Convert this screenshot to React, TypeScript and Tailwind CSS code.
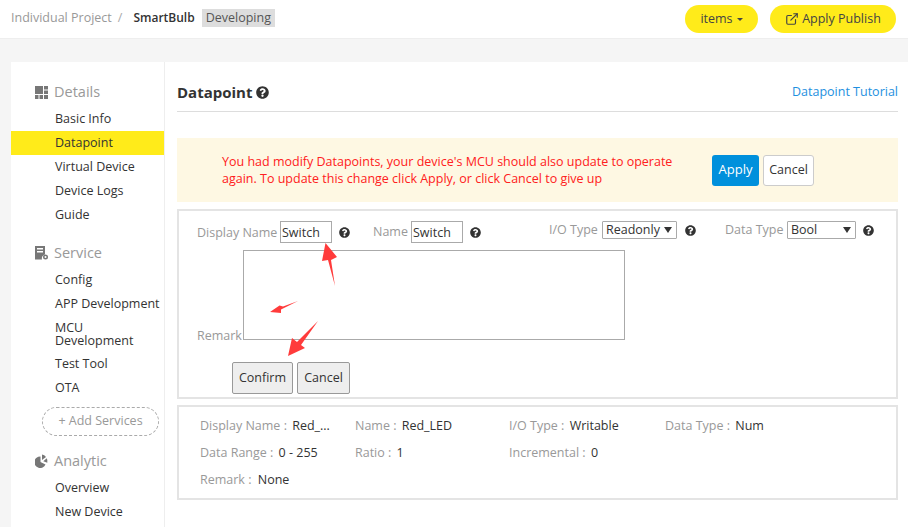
import { FaQuestionCircle } from "react-icons/fa";
import { ExternalLink } from "lucide-react";

function Help({ className = "" }: { className?: string }) {
  return <FaQuestionCircle className={`text-[11px] text-[#333] shrink-0 ${className}`} />;
}

function Caret() {
  return <span className="border-x-[4px] border-x-transparent border-t-[6px] border-t-[#333]" />;
}

function DetailsIcon() {
  return (
    <svg width="13" height="13" viewBox="0 0 13 13" fill="#777" className="shrink-0">
      <rect x="0" y="0" width="8" height="8" />
      <rect x="9" y="0" width="4" height="3.5" />
      <rect x="9" y="4.5" width="4" height="3.5" />
      <rect x="0" y="9" width="3.5" height="4" />
      <rect x="4.5" y="9" width="3.5" height="4" />
      <rect x="9" y="9" width="4" height="4" />
    </svg>
  );
}

function ServiceIcon() {
  return (
    <svg width="13" height="14" viewBox="0 0 13 14" className="shrink-0">
      <path d="M0 0h10v8.5a4 4 0 0 0-3 5H0z" fill="#777" />
      <rect x="2" y="2" width="6" height="1.5" fill="#fff" />
      <rect x="2" y="5" width="6" height="1.5" fill="#fff" />
      <circle cx="10.5" cy="11" r="2.5" fill="#777" />
      <circle cx="10.5" cy="11" r="1" fill="#fff" />
    </svg>
  );
}

function AnalyticIcon() {
  return (
    <svg width="13" height="14" viewBox="0 0 13 14" fill="#777" className="shrink-0">
      <path d="M5.5 2.5v5.5l5 2.5a5.8 5.8 0 1 1-5-8z" />
      <path d="M7 0.5a6 6 0 0 1 4 2.5l-4 3z" />
      <path d="M11.7 4.2a6 6 0 0 1 .6 4.6l-4-1.5z" />
    </svg>
  );
}

function NavGroup({ icon, title, children }: { icon: React.ReactNode; title: string; children: React.ReactNode }) {
  return (
    <div>
      <div className="flex items-center gap-[6px] pl-[24px] h-[24px] text-[14.5px] text-[#999]">
        {icon}
        <span>{title}</span>
      </div>
      <ul className="mt-[3px]">{children}</ul>
    </div>
  );
}

function NavItem({ label, active, tall }: { label: string; active?: boolean; tall?: boolean }) {
  return (
    <li
      className={`pl-[44px] flex items-center text-[#333] ${tall ? "h-[36px] leading-[13px]" : "h-[24px]"} ${active ? "bg-[#ffeb1a]" : ""}`}
    >
      {label}
    </li>
  );
}

function Field({ label, value, className }: { label: string; value: string; className: string }) {
  return (
    <div className={`whitespace-nowrap ${className}`}>
      <span className="text-[#999]">{label} : </span>
      <span className="text-[#333] ml-[2px]">{value}</span>
    </div>
  );
}

export default function App() {
  return (
    <div className="relative h-[527px] w-[908px] overflow-hidden bg-[#f5f5f5] text-[12.5px] text-[#333] font-['Open_Sans','Noto_Sans',sans-serif]">
      <header className="h-[39px] bg-white border-b border-[#eee] flex items-center justify-between pl-[11px] pr-[12px]">
        <div className="flex items-center pb-[2px]">
          <span className="text-[#999]">Individual Project</span>
          <span className="text-[#aaa] ml-[6px]">/</span>
          <span className="text-[12px] font-semibold text-[#333] ml-[11px]">SmartBulb</span>
          <span className="bg-[#ddd] text-[#555] px-[4px] ml-[7px] h-[18px] leading-[18px]">Developing</span>
        </div>
        <div className="flex items-center gap-[12px]">
          <button className="h-[28px] w-[73px] rounded-full bg-[#ffeb1a] text-[#444] flex items-center justify-center gap-[4px]">
            items
            <span className="border-x-[3px] border-x-transparent border-t-[3px] border-t-[#444]" />
          </button>
          <button className="h-[28px] w-[126px] rounded-full bg-[#ffeb1a] text-[#444] flex items-center justify-center gap-[3px]">
            <ExternalLink size={14} strokeWidth={2} />
            Apply Publish
          </button>
        </div>
      </header>

      <div className="mt-[23px] ml-[11px] bg-white flex h-[480px]">
        <aside className="w-[154px] shrink-0 border-r border-[#eee] pt-[18px]">
          <NavGroup icon={<DetailsIcon />} title="Details">
            <NavItem label="Basic Info" />
            <NavItem label="Datapoint" active />
            <NavItem label="Virtual Device" />
            <NavItem label="Device Logs" />
            <NavItem label="Guide" />
          </NavGroup>
          <div className="mt-[14px]">
            <NavGroup icon={<ServiceIcon />} title="Service">
              <NavItem label="Config" />
              <NavItem label="APP Development" />
              <NavItem label="MCU Development" tall />
              <NavItem label="Test Tool" />
              <NavItem label="OTA" />
            </NavGroup>
          </div>
          <div className="ml-[31px] mt-[7px] w-[117px] h-[29px] rounded-full border border-dashed border-[#aaa] flex items-center justify-center text-[#999]">
            + Add Services
          </div>
          <div className="mt-[13px]">
            <NavGroup icon={<AnalyticIcon />} title="Analytic">
              <NavItem label="Overview" />
              <NavItem label="New Device" />
            </NavGroup>
          </div>
        </aside>

        <main className="flex-1 pl-[12px] pr-[10px]">
          <div className="h-[50px] pt-[17px] border-b border-[#ddd] flex justify-between">
            <h1 className="text-[15px] font-bold text-[#333] flex items-center gap-[4px] h-[26px]">
              Datapoint
              <FaQuestionCircle className="text-[13px] text-[#333]" />
            </h1>
            <a className="text-[#1e90e0] h-[26px] leading-[26px]">Datapoint Tutorial</a>
          </div>

          <div className="mt-[26px] h-[64px] bg-[#fef8e3] flex items-center pl-[45px]">
            <p className="w-[490px] pr-[30px] text-[#ff2020] leading-[17px]">
              You had modify Datapoints, your device's MCU should also update to operate again. To update this change
              click Apply, or click Cancel to give up
            </p>
            <button className="w-[47px] h-[31px] bg-[#0090dc] text-white rounded-[3px] text-[13px]">Apply</button>
            <button className="w-[51px] h-[31px] ml-[4px] bg-white border border-[#ccc] rounded-[3px] text-[#333]">
              Cancel
            </button>
          </div>

          <div className="mt-[7px] h-[190px] border-2 border-[#e4e4e4] pl-[18px]">
            <div className="flex items-start pt-[10px]">
              <div className="flex items-center">
                <span className="text-[#999] w-[83px] pt-[2px]">Display Name</span>
                <input
                  readOnly
                  value="Switch"
                  className="w-[52px] h-[22px] border border-[#aaa] pl-[1px] text-[#333] outline-none"
                />
                <Help className="ml-[7px]" />
                <span className="text-[#999] ml-[23px] w-[38px] pt-[1px]">Name</span>
                <input
                  readOnly
                  value="Switch"
                  className="w-[52px] h-[22px] border border-[#aaa] pl-[1px] text-[#333] outline-none"
                />
                <Help className="ml-[7px]" />
              </div>
              <div className="flex items-center ml-[68px] h-[18px]">
                <span className="text-[#999] w-[53px]">I/O Type</span>
                <div className="w-[75px] h-[18px] border border-[#aaa] rounded-[1px] flex items-center justify-between pl-[3px] pr-[4px]">
                  Readonly
                  <Caret />
                </div>
                <Help className="ml-[8px]" />
                <span className="text-[#999] ml-[29px] w-[62px]">Data Type</span>
                <div className="w-[69px] h-[18px] border border-[#aaa] rounded-[1px] flex items-center justify-between pl-[3px] pr-[4px]">
                  Bool
                  <Caret />
                </div>
                <Help className="ml-[7px]" />
              </div>
            </div>

            <div className="flex items-end mt-[7px]">
              <span className="text-[#999] w-[46px] leading-[18px] -mb-[5px]">Remark</span>
              <div className="w-[382px] h-[90px] border border-[#aaa]" />
            </div>

            <div className="flex gap-[4px] mt-[22px] ml-[35px]">
              <button className="w-[61px] h-[32px] border border-[#999] rounded-[2px] bg-[#eee] text-[#333]">
                Confirm
              </button>
              <button className="w-[53px] h-[32px] border border-[#999] rounded-[2px] bg-[#eee] text-[#333]">
                Cancel
              </button>
            </div>
          </div>

          <div className="mt-[6px] h-[95px] border-2 border-[#e4e4e4] pl-[21px] pt-[5px] leading-[27px]">
            <div className="flex">
              <Field label="Display Name" value="Red_..." className="w-[155px]" />
              <Field label="Name" value="Red_LED" className="w-[154px]" />
              <Field label="I/O Type" value="Writable" className="w-[156px]" />
              <Field label="Data Type" value="Num" className="w-[100px]" />
            </div>
            <div className="flex">
              <Field label="Data Range" value="0 - 255" className="w-[155px]" />
              <Field label="Ratio" value="1" className="w-[154px]" />
              <Field label="Incremental" value="0" className="w-[156px]" />
            </div>
            <div className="flex">
              <div className="whitespace-nowrap">
                <span className="text-[#999]">Remark : </span>
                <span className="text-[#333] ml-[3px]">None</span>
              </div>
            </div>
          </div>
        </main>
      </div>

      {/* red annotation arrows drawn over the form */}
      <svg className="absolute left-0 top-0 pointer-events-none" width="908" height="527" fill="#ff3b3b">
        <path d="M325.5 243 L337 257 L331 260 L335 286 L328 260 L322 261 Z" />
        <path d="M270 312 L279.5 305.5 L283 306.5 L298 301 L281 309.5 L281 313 Z" />
        <path d="M288 356 L292 338 L297 342 L318 321 L301 345 L305 348 Z" />
      </svg>
    </div>
  );
}
